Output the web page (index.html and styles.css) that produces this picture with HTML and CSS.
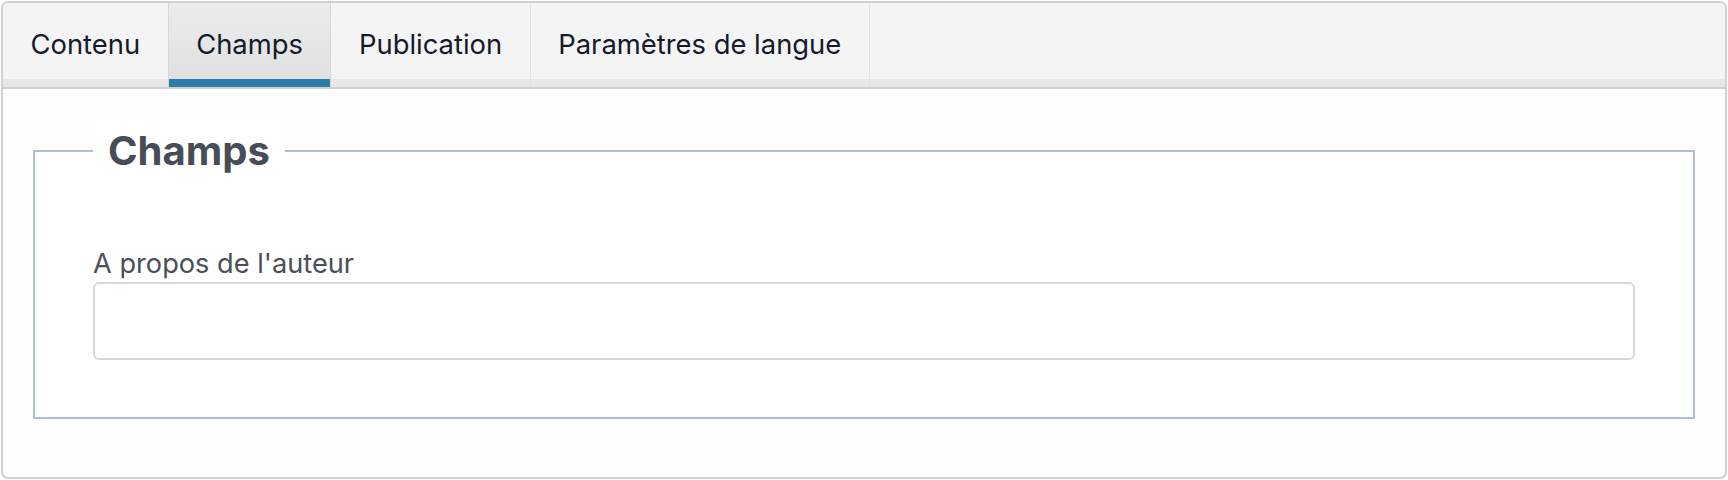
FILE: index.html
```html
<!DOCTYPE html>
<html lang="fr">
<head>
<meta charset="utf-8">
<title>Champs</title>
<link rel="stylesheet" href="styles.css">
</head>
<body>
<div class="tabset">
  <div class="tablist" role="tablist">
    <button class="tab" role="tab">Contenu</button>
    <button class="tab active" role="tab">Champs</button>
    <button class="tab" role="tab">Publication</button>
    <button class="tab" role="tab">Paramètres de langue</button>
  </div>
  <div class="panel">
    <fieldset class="group">
      <legend class="group-title">Champs</legend>
      <label class="field-label" for="about">A propos de l'auteur</label>
      <input class="field-input" id="about" type="text">
    </fieldset>
  </div>
</div>
</body>
</html>
```

FILE: styles.css
```css
html, body {
  margin: 0;
  padding: 0;
  background: #ffffff;
}

body {
  font-family: Inter, "Noto Sans", "Liberation Sans", sans-serif;
}

.tabset {
  margin: 1px;
  height: 478px;
  box-sizing: border-box;
  border: 2px solid #d0d0d0;
  border-radius: 7px;
  overflow: hidden;
  display: flex;
  flex-direction: column;
  background: #fefefe;
}

.tablist {
  display: flex;
  height: 86px;
  box-sizing: border-box;
  background: #f4f4f4;
  border-bottom: 2px solid #cfcfcf;
  box-shadow: inset 0 -8px 0 #e7e7e7;
  flex: none;
}

.tab {
  appearance: none;
  border: 0;
  border-right: 1px solid #e2e2e2;
  margin: 0;
  background: transparent;
  padding: 5px 27.5px 8px;
  font-family: inherit;
  font-size: 27.4px;
  color: #151a2a;
  display: flex;
  align-items: center;
  cursor: pointer;
}

.tab.active {
  background: linear-gradient(#ececec, #dfdfdf);
  border-left: 1px solid #d6d6d6;
  border-right: 1px solid #d6d6d6;
  margin-left: -1px;
  box-shadow: inset 0 -8px 0 #2a7ea7;
}

.panel {
  flex: 1;
  padding: 29px 30px 0;
}

.group {
  margin: 0;
  border: 2px solid #b1bfcc;
  background: #ffffff;
  padding: 0 58px 57px;
  display: flex;
  flex-direction: column;
}

.group-title {
  background: #ffffff;
  padding: 9px 15px;
  font-size: 40px;
  line-height: 48px;
  font-weight: 700;
  color: #474d56;
}

.field-label {
  margin-top: 64px;
  font-size: 27.2px;
  line-height: 31px;
  color: #4a4f58;
  margin-bottom: 3px;
}

.field-input {
  height: 78px;
  box-sizing: border-box;
  border: 2px solid #d3d8de;
  border-radius: 6px;
  background: #ffffff;
  font-family: inherit;
  font-size: 24px;
  padding: 0 16px;
  margin: 0;
  outline: none;
}
```
